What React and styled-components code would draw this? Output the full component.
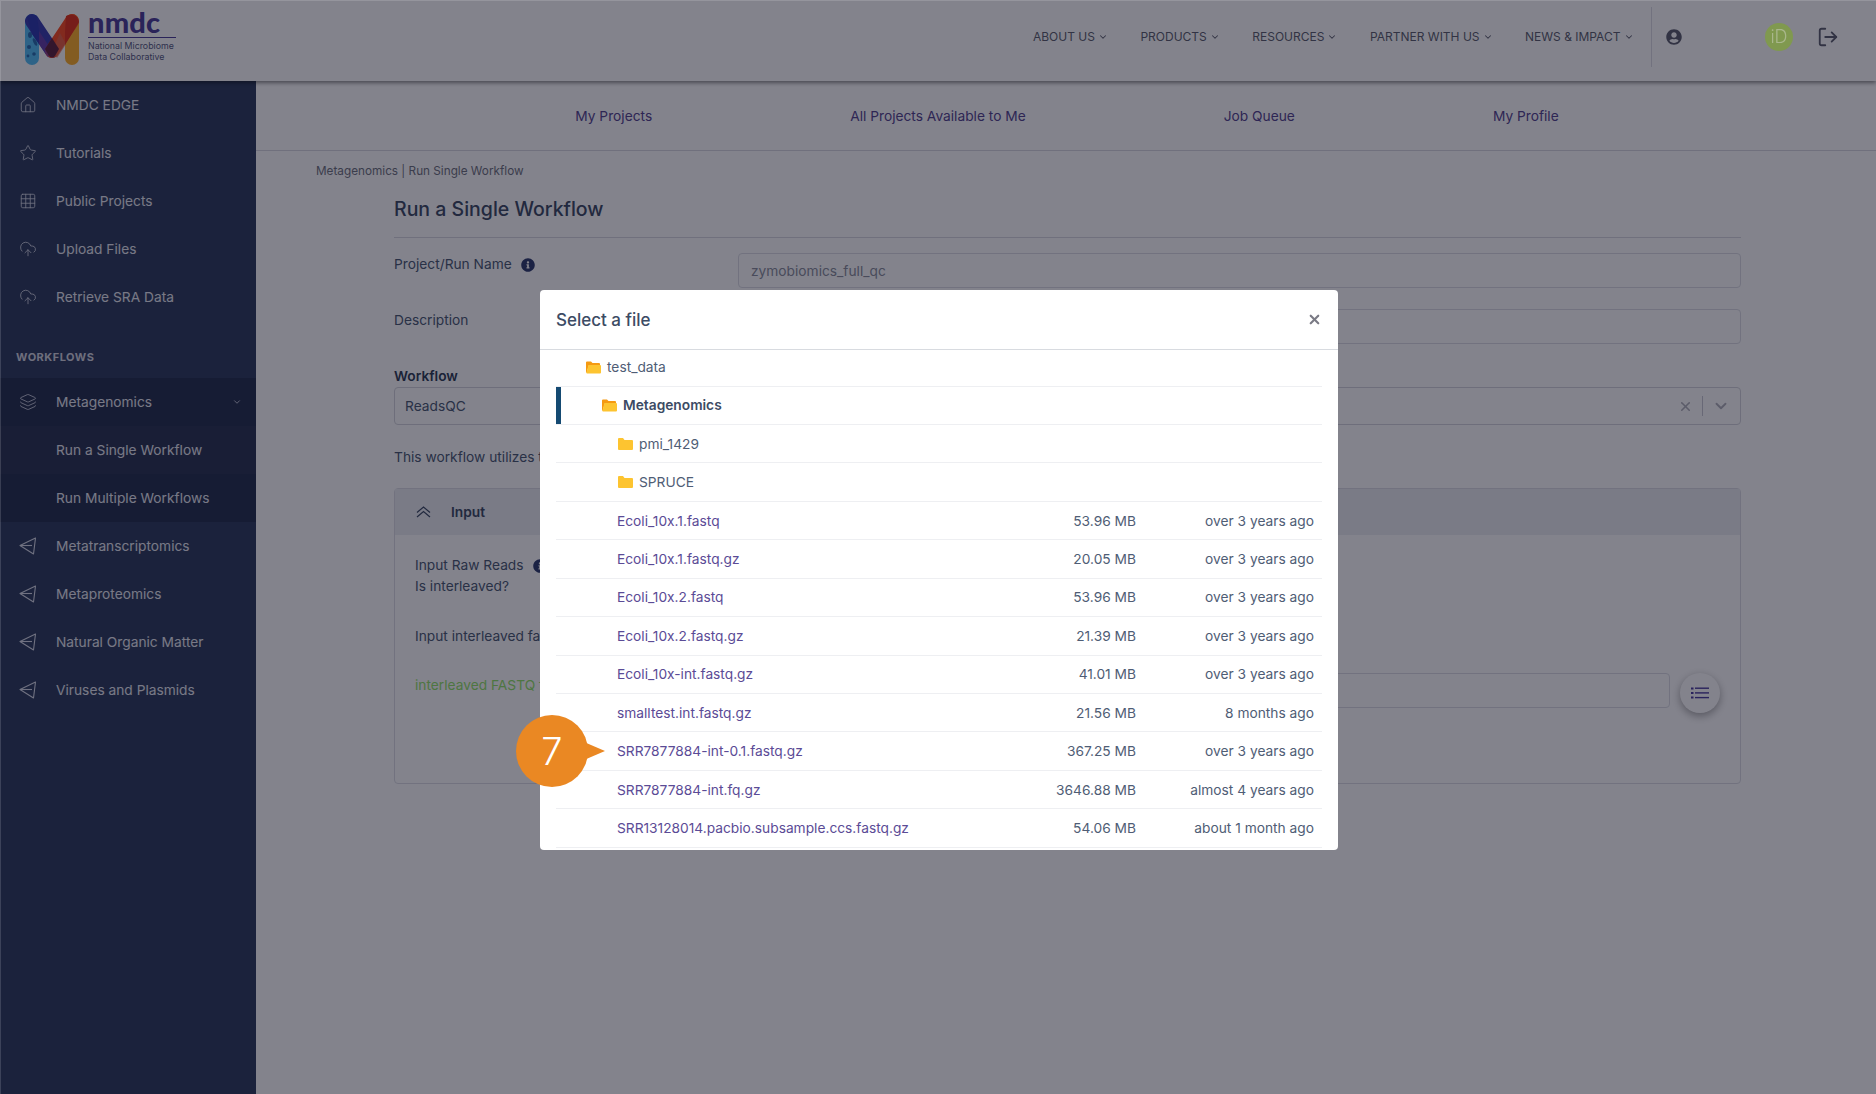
import React from 'react';
import styled, { createGlobalStyle } from 'styled-components';
import { House, Star, Grid3x3, CloudUpload, Layers, ChevronDown, LogOut, X } from 'lucide-react';
import { FaUserCircle, FaInfoCircle } from 'react-icons/fa';

const GlobalStyle = createGlobalStyle`
  * {
    box-sizing: border-box;
  }
  body {
    margin: 0;
    background: #fff;
    font-family: Inter, 'Noto Sans', sans-serif;
    font-size: 13.75px;
    color: #3c4b64;
  }
`;

const Page = styled.div`
  min-height: 1094px;
  display: flex;
  flex-direction: column;
`;

const Header = styled.header`
  height: 81px;
  display: flex;
  align-items: center;
  justify-content: space-between;
  padding: 0 37px 8px 25px;
  background: #fff;
  box-shadow: 0 2px 4px rgba(0, 0, 0, 0.45);
  position: relative;
`;

const Logo = styled.div`
  display: flex;
  gap: 9px;
  align-items: flex-start;
  margin-top: 6px;
`;

const LogoText = styled.div`
  display: flex;
  flex-direction: column;
  width: 89px;
`;

const LogoName = styled.div`
  font-family: Lato, sans-serif;
  font-weight: 900;
  font-size: 29px;
  line-height: 13px;
  padding-top: 1px;
  letter-spacing: 0.2px;
  color: #4d3f99;
  border-bottom: 1px solid #4d3f99;
  height: 24px;
  width: 88px;
  margin-bottom: 2px;
`;

const LogoTag = styled.div`
  font-size: 8.8px;
  line-height: 11px;
  white-space: nowrap;
  color: #55597e;
`;

const TopNav = styled.nav`
  display: flex;
  align-items: center;
`;

const NavLink = styled.a`
  display: flex;
  align-items: center;
  gap: 3px;
  font-size: 12px;
  color: #5c5f6e;
  margin-right: 32.5px;
  white-space: nowrap;
  &:last-of-type {
    margin-right: 17px;
  }
`;

const NavDivider = styled.div`
  width: 1px;
  height: 60px;
  background: #dcdde4;
`;

const UserIcon = styled.span`
  display: flex;
  margin-left: 14.5px;
  margin-right: 83px;
  color: #5c5f6e;
`;

const OrcidBadge = styled.span`
  position: relative;
  z-index: 11;
  width: 28px;
  height: 28px;
  border-radius: 50%;
  background: #80994f;
  color: #a9b78c;
  display: flex;
  align-items: center;
  justify-content: center;
  font-size: 18px;
  font-weight: 300;
  margin-right: 24px;
`;

const LogoutIcon = styled.span`
  display: flex;
  color: #5c5f6e;
`;

const Layout = styled.div`
  flex: 1;
  display: flex;
`;

const Sidebar = styled.aside`
  width: 256px;
  flex-shrink: 0;
  background: #2e3d5e;
`;

const SideItem = styled.div`
  height: 48px;
  display: flex;
  align-items: center;
  gap: 19px;
  padding: 0 14px 0 ${({ $sub }) => ($sub ? '56px' : '19px')};
  color: #e8eaf2;
  background: ${({ $bg }) => $bg || 'transparent'};
  svg {
    flex-shrink: 0;
    color: #d8dbe8;
  }
`;

const SideLabel = styled.span`
  flex: 1;
`;

const SideHeading = styled.div`
  height: 57px;
  padding: 29px 0 0 16px;
  font-size: 11px;
  line-height: 14px;
  font-weight: 700;
  letter-spacing: 0.5px;
  color: #d4d6e0;
`;

const Main = styled.main`
  flex: 1;
  min-width: 0;
`;

const SubNav = styled.div`
  height: 70px;
  display: flex;
  align-items: center;
  justify-content: center;
  gap: 198px;
  border-bottom: 1px solid #d8d8e0;
  padding-left: 2px;
`;

const SubNavLink = styled.a`
  color: #55458f;
  white-space: nowrap;
`;

const Breadcrumb = styled.div`
  margin: 12px 0 0 60px;
  font-size: 11.75px;
  line-height: 16px;
  color: #6f7280;
`;

const Form = styled.div`
  margin: 0 135px 0 138px;
`;

const Title = styled.h1`
  margin: 16px 0 15px;
  padding-bottom: 14px;
  font-size: 19.5px;
  line-height: 28px;
  font-weight: 500;
  color: #3c4b64;
  border-bottom: 1px solid #d8d8e0;
`;

const FieldRow = styled.div`
  height: 35px;
  margin-bottom: 21px;
  display: grid;
  grid-template-columns: 344px 1fr;
`;

const FieldLabel = styled.label`
  display: flex;
  align-items: flex-start;
  gap: 9px;
  color: #4b5a73;
  line-height: 22px;
`;

const TextBox = styled.div`
  height: 35px;
  border: 1px solid #dcdde4;
  border-radius: 4px;
  padding: 0 12px;
  display: flex;
  align-items: center;
  color: #8a8f9c;
  background: #fff;
`;

const WorkflowLabel = styled.div`
  font-weight: 600;
  color: #2f3c55;
  line-height: 17px;
  padding-top: 3px;
  margin-bottom: 2px;
`;

const SelectBox = styled.div`
  height: 38px;
  border: 1px solid #d4d5dc;
  border-radius: 4px;
  display: flex;
  align-items: center;
  padding: 0 10px;
  color: #4b5a73;
  justify-content: space-between;
`;

const SelectControls = styled.div`
  display: flex;
  align-items: center;
  gap: 9px;
  color: #b0b1ba;
`;

const SelectDivider = styled.span`
  width: 1px;
  height: 20px;
  background: #c8c9d2;
`;

const Para = styled.p`
  margin: 22px 0 21px;
  line-height: 20px;
  color: #4b5a73;
`;

const Panel = styled.section`
  height: 296px;
  border: 1px solid #dcdde4;
  border-radius: 4px;
`;

const PanelHead = styled.div`
  height: 46px;
  display: flex;
  align-items: center;
  gap: 20px;
  padding-left: 21px;
  background: #eceef3;
  font-weight: 600;
  color: #3c4b64;
`;

const PanelBody = styled.div`
  padding: 20px 20px 0;
`;

const PanelLine = styled.div`
  display: flex;
  align-items: center;
  gap: 9px;
  line-height: 21px;
  color: #4b5a73;
  margin-bottom: ${({ $mb }) => $mb || '0'};
`;

const FileRow = styled.div`
  display: grid;
  grid-template-columns: 344px 1fr 40px;
  gap: 10px;
  align-items: center;
`;

const GreenText = styled.span`
  color: #95e46a;
  padding-bottom: 12px;
`;

const ListButton = styled.button`
  width: 40px;
  height: 40px;
  padding: 0;
  border-radius: 50%;
  border: none;
  background: #fff;
  color: #4b3c9e;
  display: flex;
  align-items: center;
  justify-content: center;
  box-shadow: 0 3px 8px rgba(0, 0, 0, 0.35);
  margin-top: 5px;
`;

const Backdrop = styled.div`
  position: fixed;
  inset: 0;
  background: rgba(8, 8, 26, 0.5);
  display: flex;
  justify-content: center;
  align-items: flex-start;
  padding-top: 289px;
  padding-left: 1px;
  z-index: 10;
  border-top: 1px solid rgba(255, 255, 255, 0.15);
  border-left: 1px solid rgba(255, 255, 255, 0.15);
`;

const Modal = styled.div`
  width: 798px;
  height: 560px;
  background: #fff;
  border-radius: 4px;
  position: relative;
`;

const ModalHead = styled.div`
  height: 60px;
  display: flex;
  align-items: center;
  justify-content: space-between;
  padding: 0 16px;
  border-bottom: 1px solid #d8dbe0;
`;

const ModalTitle = styled.h2`
  margin: 0;
  font-size: 17px;
  font-weight: 500;
  color: #3c4b64;
`;

const CloseIcon = styled.span`
  display: flex;
  color: #7a7a85;
`;

const ModalBody = styled.div`
  padding: 0 16px;
`;

const Row = styled.div`
  height: 38.45px;
  display: grid;
  grid-template-columns: 1fr 130px 178px;
  align-items: center;
  padding-right: 8px;
  border-bottom: 1px solid #eeeff2;
  position: relative;
  &:first-child {
    height: 36.5px;
    padding-bottom: 1px;
  }
`;

const FolderName = styled.div`
  display: flex;
  align-items: center;
  gap: 6px;
  padding-left: ${({ $depth }) => 30 + $depth * 16}px;
  color: ${({ $active }) => ($active ? '#3c4b64' : '#4f5d75')};
  font-weight: ${({ $active }) => ($active ? 600 : 400)};
`;

const ActiveBar = styled.span`
  position: absolute;
  left: 0;
  top: 0;
  bottom: 0;
  width: 5px;
  background: #154a72;
`;

const FileName = styled.a`
  padding-left: 61px;
  color: #5b4b96;
  white-space: nowrap;
`;

const FileCell = styled.span`
  text-align: right;
  color: #4f5d75;
  white-space: nowrap;
`;

const Callout = styled.div`
  position: absolute;
  left: -40px;
  top: 50%;
  width: 72px;
  height: 72px;
  margin-top: -36px;
  border-radius: 50%;
  background: #ea8823;
  color: #fff;
  font-size: 38px;
  font-weight: 300;
  display: flex;
  align-items: center;
  justify-content: center;
  &::after {
    content: '';
    position: absolute;
    left: 68px;
    top: 27px;
    border-style: solid;
    border-width: 9px 0 9px 21px;
    border-color: transparent transparent transparent #ea8823;
  }
`;

function LogoMark() {
  return (
    <svg width="54" height="52" viewBox="0 0 54 52">
      <line x1="47" y1="7" x2="47" y2="44" stroke="#ffb02a" strokeWidth="14" strokeLinecap="round" />
      <line x1="7" y1="7" x2="7" y2="44" stroke="#55bff5" strokeWidth="14" strokeLinecap="round" />
      <g fill="#2a6fb0">
        <ellipse cx="5" cy="21" rx="2" ry="3" />
        <ellipse cx="10" cy="28" rx="1.6" ry="4" transform="rotate(-25 10 28)" />
        <circle cx="4" cy="33" r="2" />
        <circle cx="9" cy="40" r="1.8" />
        <circle cx="3" cy="42" r="1.4" />
        <circle cx="11" cy="18" r="1.4" />
      </g>
      <line x1="7" y1="7" x2="27" y2="37" stroke="#3a3fb0" strokeWidth="14" strokeLinecap="round" />
      <line x1="47" y1="7" x2="27" y2="37" stroke="#fc4c22" strokeWidth="14" strokeLinecap="round" />
      <path d="M14 17 L27 37 L23 43 L14 30 Z" fill="#7140a8" opacity="0.8" />
      <path d="M35 19 L41 30 L32 44 L27 37 Z" fill="#e36a50" opacity="0.7" />
      <path d="M27 24 L34 35 L30 42 Q27 45 24 42 L20 35 Z" fill="#5e2440" />
      <path d="M2 3 Q7 -1 12 2 L14 17 L14 30 L7 20 Z" fill="#2e3ab0" />
      <path d="M41 2 Q47 -1 52 3 L54 8 L40 31 L40 18 Z" fill="#e4321a" />
    </svg>
  );
}

function PlaneIcon() {
  return (
    <svg width="18" height="18" viewBox="0 0 18 18" fill="none" stroke="currentColor" strokeWidth="1.1" strokeLinejoin="round">
      <path d="M1 8.5 L16.5 1 L14.5 17 Z" />
      <path d="M1 8.5 H13" />
    </svg>
  );
}

function FolderIcon({ open }) {
  if (open) {
    return (
      <svg width="15" height="13" viewBox="0 0 15 13">
        <path d="M0 1.5 Q0 0.5 1 0.5 H5 L6.5 2 H13 Q14 2 14 3 V4 H3 L0.5 12 L0 11.5 Z" fill="#f59a12" />
        <path d="M2.5 4 H14 Q15 4 15 5 V11.5 Q15 12.5 14 12.5 H1 Q0.3 12.5 0.5 11.5 Z" fill="#fdc430" />
      </svg>
    );
  }
  return (
    <svg width="15" height="12" viewBox="0 0 15 12">
      <path d="M0 1 Q0 0 1 0 H5 L6.5 2 H14 Q15 2 15 3 V11 Q15 12 14 12 H1 Q0 12 0 11 Z" fill="#fdc430" />
    </svg>
  );
}

function ChevronsIcon() {
  return (
    <svg width="15" height="12" viewBox="0 0 15 12" fill="none" stroke="#3c4b64" strokeWidth="1.2">
      <path d="M1 6.5 L7.5 1 L14 6.5" />
      <path d="M1 11 L7.5 5.5 L14 11" />
    </svg>
  );
}

function ListIcon() {
  return (
    <svg width="18" height="12" viewBox="0 0 18 12" fill="currentColor">
      <rect x="0" y="0.5" width="2.5" height="2" />
      <rect x="4" y="0.5" width="14" height="1.4" />
      <rect x="0" y="5" width="2.5" height="2" />
      <rect x="4" y="5.2" width="14" height="1.4" />
      <rect x="0" y="9.5" width="2.5" height="2" />
      <rect x="4" y="9.9" width="14" height="1.4" />
    </svg>
  );
}

const navLinks = ['ABOUT US', 'PRODUCTS', 'RESOURCES', 'PARTNER WITH US', 'NEWS & IMPACT'];
const subLinks = ['My Projects', 'All Projects Available to Me', 'Job Queue', 'My Profile'];

const topItems = [
  { label: 'NMDC EDGE', Icon: House },
  { label: 'Tutorials', Icon: Star },
  { label: 'Public Projects', Icon: Grid3x3 },
  { label: 'Upload Files', Icon: CloudUpload },
  { label: 'Retrieve SRA Data', Icon: CloudUpload },
];

const otherWorkflows = ['Metatranscriptomics', 'Metaproteomics', 'Natural Organic Matter', 'Viruses and Plasmids'];

const folders = [
  { name: 'test_data', depth: 0, open: true },
  { name: 'Metagenomics', depth: 1, open: true, active: true },
  { name: 'pmi_1429', depth: 2 },
  { name: 'SPRUCE', depth: 2 },
];

const files = [
  { name: 'Ecoli_10x.1.fastq', size: '53.96 MB', when: 'over 3 years ago' },
  { name: 'Ecoli_10x.1.fastq.gz', size: '20.05 MB', when: 'over 3 years ago' },
  { name: 'Ecoli_10x.2.fastq', size: '53.96 MB', when: 'over 3 years ago' },
  { name: 'Ecoli_10x.2.fastq.gz', size: '21.39 MB', when: 'over 3 years ago' },
  { name: 'Ecoli_10x-int.fastq.gz', size: '41.01 MB', when: 'over 3 years ago' },
  { name: 'smalltest.int.fastq.gz', size: '21.56 MB', when: '8 months ago' },
  { name: 'SRR7877884-int-0.1.fastq.gz', size: '367.25 MB', when: 'over 3 years ago', callout: 7 },
  { name: 'SRR7877884-int.fq.gz', size: '3646.88 MB', when: 'almost 4 years ago' },
  { name: 'SRR13128014.pacbio.subsample.ccs.fastq.gz', size: '54.06 MB', when: 'about 1 month ago' },
];

export default function App() {
  return (
    <>
      <GlobalStyle />
      <Page>
        <Header>
          <Logo>
            <LogoMark />
            <LogoText>
              <LogoName>nmdc</LogoName>
              <LogoTag>National Microbiome</LogoTag>
              <LogoTag>Data Collaborative</LogoTag>
            </LogoText>
          </Logo>
          <TopNav>
            {navLinks.map(link => (
              <NavLink key={link}>
                {link}
                <ChevronDown size={10} strokeWidth={2.5} />
              </NavLink>
            ))}
            <NavDivider />
            <UserIcon>
              <FaUserCircle size={16} />
            </UserIcon>
            <OrcidBadge>iD</OrcidBadge>
            <LogoutIcon>
              <LogOut size={22} strokeWidth={2} />
            </LogoutIcon>
          </TopNav>
        </Header>
        <Layout>
          <Sidebar>
            {topItems.map(({ label, Icon }) => (
              <SideItem key={label}>
                <Icon size={18} strokeWidth={1.1} />
                <SideLabel>{label}</SideLabel>
              </SideItem>
            ))}
            <SideHeading>WORKFLOWS</SideHeading>
            <SideItem $bg="#24304f">
              <Layers size={18} strokeWidth={1.1} />
              <SideLabel>Metagenomics</SideLabel>
              <ChevronDown size={10} />
            </SideItem>
            <SideItem $sub $bg="#2b3552">Run a Single Workflow</SideItem>
            <SideItem $sub $bg="#24304f">Run Multiple Workflows</SideItem>
            {otherWorkflows.map(label => (
              <SideItem key={label}>
                <PlaneIcon />
                <SideLabel>{label}</SideLabel>
              </SideItem>
            ))}
          </Sidebar>
          <Main>
            <SubNav>
              {subLinks.map(link => (
                <SubNavLink key={link}>{link}</SubNavLink>
              ))}
            </SubNav>
            <Breadcrumb>Metagenomics | Run Single Workflow</Breadcrumb>
            <Form>
              <Title>Run a Single Workflow</Title>
              <FieldRow>
                <FieldLabel>
                  Project/Run Name
                  <FaInfoCircle size={14} color="#2f3c6e" style={{ marginTop: 5 }} />
                </FieldLabel>
                <TextBox>zymobiomics_full_qc</TextBox>
              </FieldRow>
              <FieldRow>
                <FieldLabel>Description</FieldLabel>
                <TextBox />
              </FieldRow>
              <WorkflowLabel>Workflow</WorkflowLabel>
              <SelectBox>
                ReadsQC
                <SelectControls>
                  <X size={15} strokeWidth={2.5} />
                  <SelectDivider />
                  <ChevronDown size={18} strokeWidth={2.5} />
                </SelectControls>
              </SelectBox>
              <Para>This workflow utilizes the data preprocessing tools.</Para>
              <Panel>
                <PanelHead>
                  <ChevronsIcon />
                  Input
                </PanelHead>
                <PanelBody>
                  <PanelLine>
                    Input Raw Reads
                    <FaInfoCircle size={14} color="#2f3c6e" />
                  </PanelLine>
                  <PanelLine $mb="29px">Is interleaved?</PanelLine>
                  <PanelLine $mb="21px">Input interleaved fastq</PanelLine>
                  <FileRow>
                    <GreenText>interleaved FASTQ file</GreenText>
                    <TextBox />
                    <ListButton>
                      <ListIcon />
                    </ListButton>
                  </FileRow>
                </PanelBody>
              </Panel>
            </Form>
          </Main>
        </Layout>
      </Page>
      <Backdrop>
        <Modal>
          <ModalHead>
            <ModalTitle>Select a file</ModalTitle>
            <CloseIcon>
              <X size={15} strokeWidth={3.5} />
            </CloseIcon>
          </ModalHead>
          <ModalBody>
            {folders.map(folder => (
              <Row key={folder.name}>
                {folder.active && <ActiveBar />}
                <FolderName $depth={folder.depth} $active={folder.active}>
                  <FolderIcon open={folder.open} />
                  {folder.name}
                </FolderName>
              </Row>
            ))}
            {files.map(file => (
              <Row key={file.name}>
                {file.callout && <Callout>{file.callout}</Callout>}
                <FileName>{file.name}</FileName>
                <FileCell>{file.size}</FileCell>
                <FileCell>{file.when}</FileCell>
              </Row>
            ))}
          </ModalBody>
        </Modal>
      </Backdrop>
    </>
  );
}
